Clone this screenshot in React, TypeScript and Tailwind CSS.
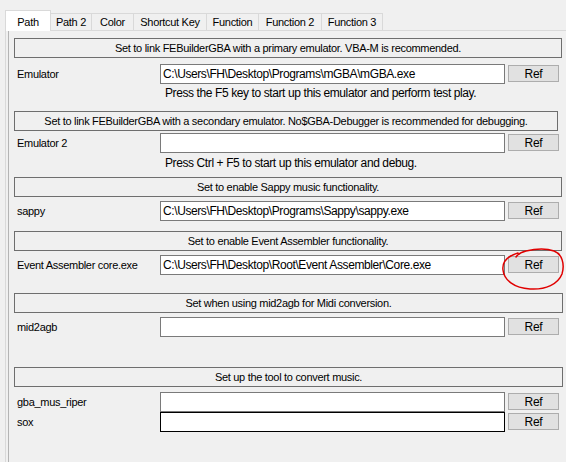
import React from "react";

const font = { fontFamily: '"Liberation Sans", Arial, sans-serif' };

function Header({ text, w = "w-[548px]", mt }: { text: string; w?: string; mt: string }) {
  return (
    <div
      className={`${mt} ml-[5px] ${w} h-[20px] border border-[#6e6e6e] flex items-center justify-center text-[11px] tracking-[-0.3px] text-black leading-none`}
    >
      {text}
    </div>
  );
}

function Row({
  label,
  value,
  mt,
  focused,
}: {
  label: string;
  value: string;
  mt: string;
  focused?: boolean;
}) {
  return (
    <div className={`${mt} flex h-[20px] items-start`}>
      <div className="w-[151px] pl-[8px] h-[20px] flex items-center text-[11px] tracking-[-0.3px] text-black">{label}</div>
      <div
        className={`w-[345px] h-[20px] bg-white border ${
          focused ? "border-black" : "border-[#7a7a7a]"
        } flex items-center pl-[2px] text-[12px] tracking-[-0.4px] text-black whitespace-nowrap overflow-hidden`}
      >
        {value}
      </div>
      <div className="ml-[3px] mt-[1px] w-[51px] h-[17px] bg-[#e1e1e1] border border-[#adadad] flex items-center justify-center text-[12px] tracking-[-0.3px] text-black">
        Ref
      </div>
    </div>
  );
}

function Note({ text, mt }: { text: string; mt: string }) {
  return (
    <div className={`${mt} h-[16px] pl-[156px] flex items-center text-[12px] tracking-[-0.4px] text-black`}>
      {text}
    </div>
  );
}

export default function App() {
  const tabs = [
    { t: "Path 2", w: "w-[41px]" },
    { t: "Color", w: "w-[42px]" },
    { t: "Shortcut Key", w: "w-[73px]" },
    { t: "Function", w: "w-[52px]" },
    { t: "Function 2", w: "w-[63px]" },
    { t: "Function 3", w: "w-[61px]" },
  ];
  return (
    <div className="w-[566px] h-[462px] bg-[#f0f0f0] overflow-hidden relative" style={font}>
      {/* tab strip */}
      <div className="h-[30px] pl-[5px] flex items-end">
        <div className="relative z-10 w-[46px] h-[21px] mb-[-1px] bg-white border-l border-t border-r border-[#d9d9d9] flex items-start justify-center pt-[3px] text-[11px] tracking-[-0.3px] text-black">
          Path
        </div>
        {tabs.map((tb) => (
          <div
            key={tb.t}
            className={`${tb.w} h-[17px] border-t border-r border-[#d9d9d9] bg-[#f0f0f0] flex items-center justify-center text-[11px] tracking-[-0.3px] text-black`}
          >
            {tb.t}
          </div>
        ))}
      </div>
      {/* panel */}
      <div className="ml-[5px] h-[432px] border-l border-t border-[#d9d9d9]">
        <div className="ml-[2px] h-full border-l border-[#b4b4b4] flex flex-col">
          <Header mt="mt-[7px]" text="Set to link FEBuilderGBA with a primary emulator. VBA-M is recommended." />
          <Row mt="mt-[6px]" label="Emulator" value="C:\Users\FH\Desktop\Programs\mGBA\mGBA.exe" />
          <Note mt="mt-[1px]" text="Press the F5 key to start up this emulator and perform test play." />
          <Header
            mt="mt-[10px]"
            w="w-[544px]"
            text="Set to link FEBuilderGBA with a secondary emulator. No$GBA-Debugger is recommended for debugging."
          />
          <Row mt="mt-[2px]" label="Emulator 2" value="" />
          <Note mt="mt-[2px]" text="Press Ctrl + F5 to start up this emulator and debug." />
          <Header mt="mt-[6px]" text="Set to enable Sappy music functionality." />
          <Row mt="mt-[4px]" label="sappy" value="C:\Users\FH\Desktop\Programs\Sappy\sappy.exe" />
          <Header mt="mt-[10px]" text="Set to enable Event Assembler functionality." />
          <Row mt="mt-[4px]" label="Event Assembler core.exe" value="C:\Users\FH\Desktop\Root\Event Assembler\Core.exe" />
          <Header mt="mt-[18px]" w="w-[549px]" text="Set when using mid2agb for Midi conversion." />
          <Row mt="mt-[4px]" label="mid2agb" value="" />
          <Header mt="mt-[30px]" w="w-[549px]" text="Set up the tool to convert music." />
          <Row mt="mt-[5px]" label="gba_mus_riper" value="" />
          <Row mt="mt-0" label="sox" value="" focused />
        </div>
      </div>
      {/* red hand-drawn circle */}
      <svg className="absolute left-[496px] top-[244px] pointer-events-none" width="70" height="50" viewBox="0 0 70 50">
        <path
          d="M22 9 C 12 12, 6 18, 7 26 C 8 36, 18 44, 34 45 C 50 46, 62 40, 66 30 C 69 20, 66 10, 58 7 C 50 4, 38 5, 30 7 C 26 8, 22 10, 20 13"
          fill="none"
          stroke="#e00000"
          strokeWidth="1.5"
          strokeLinecap="round"
        />
      </svg>
    </div>
  );
}
